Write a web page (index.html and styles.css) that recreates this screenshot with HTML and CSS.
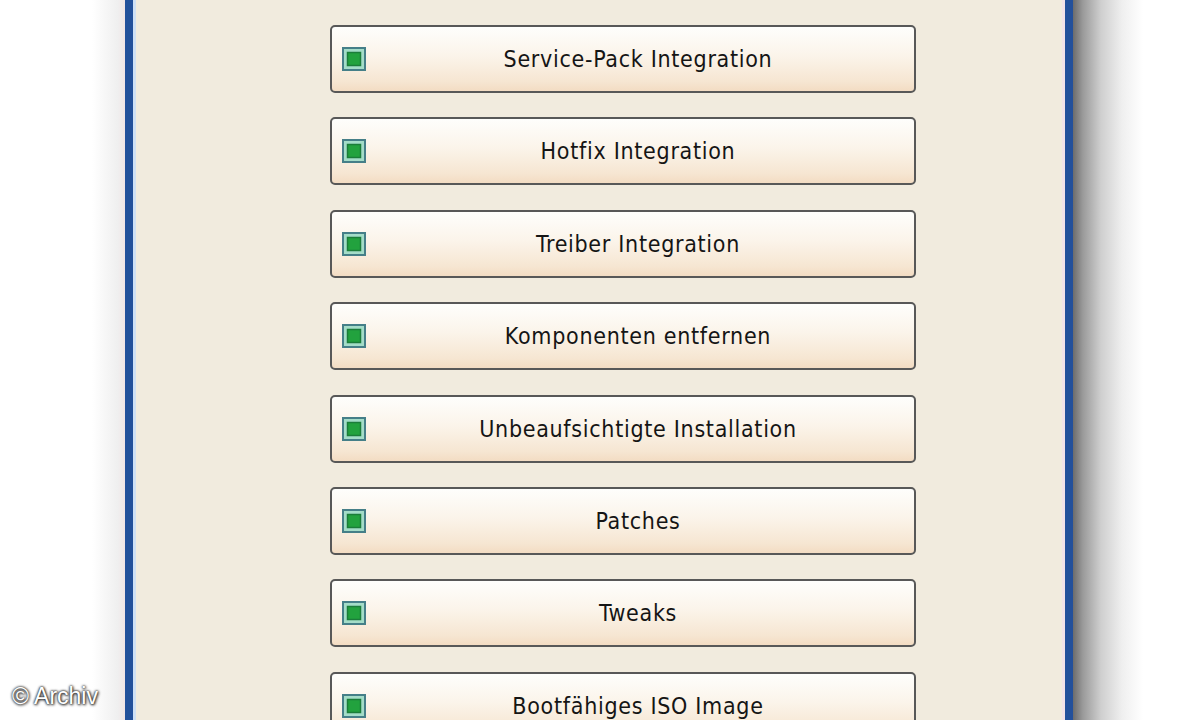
FILE: index.html
```html
<!DOCTYPE html>
<html lang="de">
<head>
<meta charset="utf-8">
<title>nLite</title>
<link rel="stylesheet" href="styles.css">
</head>
<body>
<div class="page">
  <div class="shade-left"></div>
  <div class="window">
    <div class="list">
      <div class="btn"><svg class="ico" viewBox="0 0 24 24"><rect x="1" y="1" width="22" height="22" class="ico-out"/><rect x="5.5" y="5.5" width="13" height="13" class="ico-in"/></svg><span class="label">Service-Pack Integration</span></div>
      <div class="btn"><svg class="ico" viewBox="0 0 24 24"><rect x="1" y="1" width="22" height="22" class="ico-out"/><rect x="5.5" y="5.5" width="13" height="13" class="ico-in"/></svg><span class="label">Hotfix Integration</span></div>
      <div class="btn"><svg class="ico" viewBox="0 0 24 24"><rect x="1" y="1" width="22" height="22" class="ico-out"/><rect x="5.5" y="5.5" width="13" height="13" class="ico-in"/></svg><span class="label">Treiber Integration</span></div>
      <div class="btn"><svg class="ico" viewBox="0 0 24 24"><rect x="1" y="1" width="22" height="22" class="ico-out"/><rect x="5.5" y="5.5" width="13" height="13" class="ico-in"/></svg><span class="label">Komponenten entfernen</span></div>
      <div class="btn"><svg class="ico" viewBox="0 0 24 24"><rect x="1" y="1" width="22" height="22" class="ico-out"/><rect x="5.5" y="5.5" width="13" height="13" class="ico-in"/></svg><span class="label">Unbeaufsichtigte Installation</span></div>
      <div class="btn"><svg class="ico" viewBox="0 0 24 24"><rect x="1" y="1" width="22" height="22" class="ico-out"/><rect x="5.5" y="5.5" width="13" height="13" class="ico-in"/></svg><span class="label">Patches</span></div>
      <div class="btn"><svg class="ico" viewBox="0 0 24 24"><rect x="1" y="1" width="22" height="22" class="ico-out"/><rect x="5.5" y="5.5" width="13" height="13" class="ico-in"/></svg><span class="label">Tweaks</span></div>
      <div class="btn"><svg class="ico" viewBox="0 0 24 24"><rect x="1" y="1" width="22" height="22" class="ico-out"/><rect x="5.5" y="5.5" width="13" height="13" class="ico-in"/></svg><span class="label">Bootfähiges ISO Image</span></div>
    </div>
  </div>
  <div class="shade-right"></div>
</div>
<div class="credit">© Archiv</div>
</body>
</html>
```
FILE: styles.css
```css
html, body {
  margin: 0;
  height: 720px;
  overflow: hidden;
  background: #ffffff;
}
body {
  position: relative;
  font-family: "DejaVu Sans", "Liberation Sans", sans-serif;
}
.page {
  display: flex;
  height: 720px;
}
.shade-left {
  width: 125px;
  flex: none;
  background: linear-gradient(to right, #ffffff 0, #ffffff 92px, #efefef 118px, #f2e4e6 125px);
}
.window {
  flex: none;
  width: 948px;
  box-sizing: border-box;
  border-left: 8px solid #23509b;
  border-right: 8px solid #23509b;
  background: #f1ebde;
  box-shadow: inset 3px 0 0 #cfe0f5, inset -3px 0 0 #f2e2e8;
  padding: 25px 0 0 197px;
}
.shade-right {
  width: 70px;
  flex: none;
  background: linear-gradient(to right, #6c6c6c 0, #9a9a9a 14%, #cfcfcf 40%, #efefef 70%, #ffffff 100%);
}
.list {
  display: flex;
  flex-direction: column;
  gap: 24.4px;
}
.btn {
  width: 586px;
  height: 68px;
  box-sizing: border-box;
  border: 2px solid #585858;
  border-radius: 5px;
  background: linear-gradient(#fefefc 0%, #fbf4ea 45%, #f6e6d2 85%, #f3dcc3 100%);
  display: flex;
  align-items: center;
  padding: 0 4px 0 10px;
  flex: none;
}
.ico {
  width: 24px;
  height: 24px;
  flex: none;
}
.ico-out {
  fill: #a4dcc8;
  stroke: #457f88;
  stroke-width: 2;
}
.ico-in {
  fill: #22a23e;
  stroke: #1b7d3a;
  stroke-width: 1.5;
}
.label {
  flex: 1;
  text-align: center;
  font-family: "DejaVu Sans Condensed", "DejaVu Sans", sans-serif;
  font-stretch: condensed;
  font-size: 23px;
  letter-spacing: 0.7px;
  color: #151515;
}
.credit {
  position: absolute;
  left: 12px;
  top: 683px;
  font-family: "Liberation Sans", sans-serif;
  font-size: 23px;
  color: #ffffff;
  text-shadow: 0 0 2px #222, 0 0 3px #333, 1px 1px 3px #444;
}
```
